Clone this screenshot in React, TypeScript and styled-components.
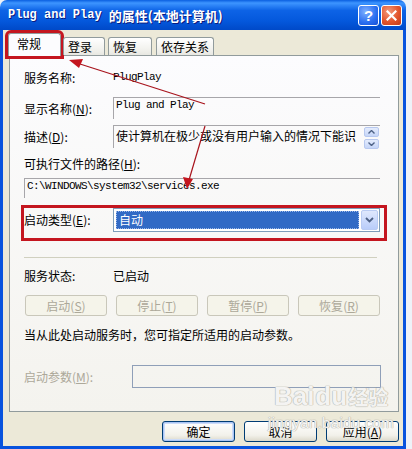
import React from 'react';
import styled, { createGlobalStyle, css } from 'styled-components';

const GlobalStyle = createGlobalStyle`
    html, body {
        margin: 0;
        padding: 0;
        background: #eef2f8;
    }
    body {
        width: 412px;
        height: 449px;
        overflow: hidden;
        font-family: "Noto Sans CJK SC", "Liberation Sans", sans-serif;
        font-size: 12px;
        color: #000;
    }
`;

const MONO = `"Liberation Mono", "Noto Sans CJK SC", monospace`;
const XP_BLUE = '#0853de';

const Window = styled.div`
    position: relative;
    width: 406px;
    height: 449px;
    display: flex;
    flex-direction: column;
`;

const TitleBar = styled.div`
    height: 30px;
    flex: none;
    display: flex;
    align-items: center;
    justify-content: space-between;
    padding: 0 4px 0 8px;
    border-radius: 7px 7px 0 0;
    background: linear-gradient(to bottom, #0a5fe0 0%, #3d95ff 10%, #0d63e6 35%, #0458dc 70%, #0049c8 100%);
`;

const Title = styled.div`
    color: #fff;
    font-weight: bold;
    text-shadow: 1px 1px 0 #0a1c80;
    display: flex;
    align-items: center;
    white-space: pre;
`;

const TitleLatin = styled.span`
    font-family: ${MONO};
    font-size: 12px;
`;

const TitleCjk = styled.span`
    font-size: 13px;
`;

const CaptionButtons = styled.div`
    display: flex;
    gap: 2px;
`;

const CaptionButton = styled.div<{ $close?: boolean }>`
    width: 19px;
    height: 19px;
    border: 1px solid #fff;
    border-radius: 3px;
    display: flex;
    align-items: center;
    justify-content: center;
    color: #fff;
    font-family: "Liberation Sans", sans-serif;
    font-weight: bold;
    font-size: 15px;
    background: ${(p) =>
        p.$close
            ? 'radial-gradient(circle at 35% 30%, #f39a7c 0%, #e2552c 55%, #c0391b 100%)'
            : 'radial-gradient(circle at 35% 30%, #7fb0ff 0%, #2a6ef0 60%, #1550d6 100%)'};
`;

const Body = styled.div`
    flex: 1;
    display: flex;
    flex-direction: column;
    background: #ece9d8;
    border: 3px solid ${XP_BLUE};
    border-top: none;
    padding: 3px 4px 4px 6px;
`;

const TabStrip = styled.div`
    height: 22px;
    display: flex;
    align-items: flex-end;
    position: relative;
    z-index: 1;
`;

const Tab = styled.div<{ $active?: boolean; $width: number; $gap: number }>`
    width: ${(p) => p.$width}px;
    margin-right: ${(p) => p.$gap}px;
    height: 18px;
    box-sizing: border-box;
    border: 1px solid #919b9c;
    border-bottom: none;
    border-radius: 3px 3px 0 0;
    background: linear-gradient(to bottom, #ffffff 0%, #f3f3ef 60%, #e8e8e2 100%);
    padding-left: 4px;
    line-height: 17px;
    font-size: 12px;
    ${(p) =>
        p.$active &&
        css`
            height: 23px;
            margin-left: -1px;
            margin-bottom: -1px;
            background: #fcfcfe;
            padding-left: 8px;
            line-height: 20px;
            outline: 3px solid #c4161f;
        `}
`;

const Panel = styled.div`
    height: 357px;
    box-sizing: border-box;
    border: 1px solid #919b9c;
    background: linear-gradient(to bottom, #fcfcfe 0%, #f4f3ee 100%);
    padding: 0 18px 0 14px;
    display: flex;
    flex-direction: column;
`;

const Row = styled.div<{ $top: number; $height: number }>`
    margin-top: ${(p) => p.$top}px;
    height: ${(p) => p.$height}px;
    display: flex;
    align-items: center;
    flex: none;
`;

const Label = styled.div<{ $disabled?: boolean; $width?: number }>`
    width: ${(p) => (p.$width ? `${p.$width}px` : 'auto')};
    flex: none;
    white-space: nowrap;
    color: ${(p) => (p.$disabled ? '#aca899' : '#000')};
    u {
        text-decoration: underline;
    }
`;

const MonoText = styled.span`
    font-family: ${MONO};
    font-size: 11px;
    letter-spacing: -0.6px;
    white-space: pre;
`;

const ReadOnlyField = styled.div<{ $height: number }>`
    flex: 1;
    height: ${(p) => p.$height}px;
    box-sizing: border-box;
    border-top: 1px solid #a7a6aa;
    border-left: 1px solid #a7a6aa;
    padding: 1px 0 0 2px;
    display: flex;
    align-items: flex-start;
    justify-content: space-between;
`;

const ScrollButtons = styled.div`
    display: flex;
    flex-direction: column;
    gap: 2px;
    margin-right: 1px;
`;

const SpinButton = styled.div`
    width: 15px;
    height: 10px;
    box-sizing: border-box;
    border: 1px solid #b7c8ef;
    border-radius: 2px;
    background: linear-gradient(to bottom, #e4ecfd, #c5d5f8);
    display: flex;
    align-items: center;
    justify-content: center;
`;

const StartupRow = styled(Row)`
    outline: 3px solid #c4161f;
    margin-left: 0;
    margin-right: -4px;
    padding-right: 4px;
    padding-bottom: 3px;
    align-items: flex-start;
`;

const StartupLabel = styled(Label)`
    line-height: 24px;
`;

const Combo = styled.div`
    flex: 1;
    height: 24px;
    box-sizing: border-box;
    border: 1px solid #7f9db9;
    background: #fff;
    display: flex;
    align-items: center;
    padding: 1px;
    gap: 2px;
`;

const ComboValue = styled.div`
    flex: 1;
    height: 18px;
    margin-left: 1px;
    box-sizing: border-box;
    background: #316ac5;
    border: 1px dotted #9cb8e8;
    color: #fff;
    line-height: 16px;
    padding-left: 2px;
`;

const ComboButton = styled.div`
    width: 17px;
    height: 20px;
    box-sizing: border-box;
    border: 1px solid #b9cbf3;
    border-radius: 2px;
    background: linear-gradient(to bottom, #dfe8fd, #b9cdfa);
    display: flex;
    align-items: center;
    justify-content: center;
`;

const Separator = styled.div`
    margin-top: 19px;
    margin-right: 3px;
    height: 1px;
    flex: none;
    background: #d0d0bf;
`;

const ButtonGrid = styled.div`
    margin-top: 12px;
    height: 21px;
    display: grid;
    grid-template-columns: repeat(4, 1fr);
    column-gap: 9px;
    padding: 0 0 0 1px;
    flex: none;
`;

const DisabledButton = styled.div`
    box-sizing: border-box;
    border: 1px solid #c9c7ba;
    border-radius: 3px;
    background: #f5f4ea;
    color: #aca899;
    display: flex;
    align-items: center;
    justify-content: center;
`;

const ParamField = styled.div`
    flex: 1;
    height: 23px;
    box-sizing: border-box;
    border: 1px solid #8f9fb8;
    margin-right: -1px;
`;

const Footer = styled.div`
    margin-top: 9px;
    display: flex;
    justify-content: flex-end;
    gap: 9px;
`;

const DialogButton = styled.div<{ $default?: boolean }>`
    width: 73px;
    height: 21px;
    box-sizing: border-box;
    border: 1px solid #003c74;
    border-radius: 3px;
    background: linear-gradient(to bottom, #ffffff 0%, #f2f1ea 70%, #dcd9cb 100%);
    display: flex;
    align-items: center;
    justify-content: center;
    ${(p) =>
        p.$default &&
        css`
            box-shadow: inset 0 0 0 1px #a9c4f4, inset 0 0 0 2px #cddcf8;
        `}
`;

const Annotations = styled.svg`
    position: absolute;
    left: 0;
    top: 0;
    pointer-events: none;
`;

const Watermark = styled.div`
    position: absolute;
    left: 268px;
    top: 382px;
    display: flex;
    flex-direction: column;
    align-items: center;
    pointer-events: none;
    color: rgba(255, 255, 255, 0.85);
    text-shadow: 0 0 1px #b9b7ad, 0 0 1px #b9b7ad, 0 0 1px #b9b7ad;
`;

const WatermarkLogo = styled.div`
    display: flex;
    align-items: flex-end;
    font-family: "Liberation Sans", sans-serif;
    font-weight: bold;
    font-size: 26px;
    line-height: 28px;
    gap: 1px;
`;

const WatermarkCjk = styled.span`
    font-family: "Noto Sans CJK SC", sans-serif;
    font-size: 20px;
    line-height: 27px;
    font-weight: bold;
`;

const WatermarkUrl = styled.div`
    margin-top: 4px;
    font-family: "Liberation Sans", sans-serif;
    font-size: 15px;
    letter-spacing: 0.3px;
`;

const Up = () => (
    <svg width="7" height="4" viewBox="0 0 7 4">
        <path d="M0.5 3.5 L3.5 0.5 L6.5 3.5" fill="none" stroke="#4d6185" strokeWidth="1.4" />
    </svg>
);

const Down = () => (
    <svg width="7" height="4" viewBox="0 0 7 4">
        <path d="M0.5 0.5 L3.5 3.5 L6.5 0.5" fill="none" stroke="#4d6185" strokeWidth="1.4" />
    </svg>
);

const ActionButtons = [
    { text: '启动', key: 'S' },
    { text: '停止', key: 'T' },
    { text: '暂停', key: 'P' },
    { text: '恢复', key: 'R' },
];

const Tabs = [
    { text: '常规', width: 53, gap: 2, active: true },
    { text: '登录', width: 42, gap: 3 },
    { text: '恢复', width: 44, gap: 4 },
    { text: '依存关系', width: 58, gap: 0 },
];

export default function App() {
    return (
        <Window>
            <GlobalStyle />
            <TitleBar>
                <Title>
                    <TitleLatin>Plug and Play </TitleLatin>
                    <TitleCjk>的属性(本地计算机)</TitleCjk>
                </Title>
                <CaptionButtons>
                    <CaptionButton>?</CaptionButton>
                    <CaptionButton $close>
                        <svg width="11" height="11" viewBox="0 0 11 11">
                            <path d="M1.5 1.5 L9.5 9.5 M9.5 1.5 L1.5 9.5" stroke="#fff" strokeWidth="2.2" strokeLinecap="square" />
                        </svg>
                    </CaptionButton>
                </CaptionButtons>
            </TitleBar>
            <Body>
                <TabStrip>
                    {Tabs.map((t) => (
                        <Tab key={t.text} $active={t.active} $width={t.width} $gap={t.gap}>
                            {t.text}
                        </Tab>
                    ))}
                </TabStrip>
                <Panel>
                    <Row $top={12} $height={18}>
                        <Label $width={89}>服务名称:</Label>
                        <MonoText>PlugPlay</MonoText>
                    </Row>
                    <Row $top={11} $height={22}>
                        <Label $width={89}>
                            显示名称(<u>N</u>):
                        </Label>
                        <ReadOnlyField $height={22}>
                            <MonoText>Plug and Play</MonoText>
                        </ReadOnlyField>
                    </Row>
                    <Row $top={6} $height={23}>
                        <Label $width={89}>
                            描述(<u>D</u>):
                        </Label>
                        <ReadOnlyField $height={23}>
                            <span>使计算机在极少或没有用户输入的情况下能识</span>
                            <ScrollButtons>
                                <SpinButton>
                                    <Up />
                                </SpinButton>
                                <SpinButton>
                                    <Down />
                                </SpinButton>
                            </ScrollButtons>
                        </ReadOnlyField>
                    </Row>
                    <Row $top={8} $height={14}>
                        <Label>
                            可执行文件的路径(<u>H</u>):
                        </Label>
                    </Row>
                    <Row $top={8} $height={20}>
                        <ReadOnlyField $height={20}>
                            <MonoText>C:\WINDOWS\system32\services.exe</MonoText>
                        </ReadOnlyField>
                    </Row>
                    <StartupRow $top={10} $height={27}>
                        <StartupLabel $width={89}>
                            启动类型(<u>E</u>):
                        </StartupLabel>
                        <Combo>
                            <ComboValue>自动</ComboValue>
                            <ComboButton>
                                <svg width="9" height="6" viewBox="0 0 9 6">
                                    <path d="M1 1 L4.5 4.5 L8 1" fill="none" stroke="#4d6185" strokeWidth="1.8" />
                                </svg>
                            </ComboButton>
                        </Combo>
                    </StartupRow>
                    <Separator />
                    <Row $top={9} $height={16}>
                        <Label $width={89}>服务状态:</Label>
                        <span>已启动</span>
                    </Row>
                    <ButtonGrid>
                        {ActionButtons.map((b) => (
                            <DisabledButton key={b.key}>
                                {b.text}(<u>{b.key}</u>)
                            </DisabledButton>
                        ))}
                    </ButtonGrid>
                    <Row $top={11} $height={14}>
                        <Label>当从此处启动服务时，您可指定所适用的启动参数。</Label>
                    </Row>
                    <Row $top={24} $height={23}>
                        <Label $disabled $width={108}>
                            启动参数(<u>M</u>):
                        </Label>
                        <ParamField />
                    </Row>
                </Panel>
                <Footer>
                    <DialogButton $default>确定</DialogButton>
                    <DialogButton>取消</DialogButton>
                    <DialogButton>
                        应用(<u>A</u>)
                    </DialogButton>
                </Footer>
            </Body>
            <Watermark>
                <WatermarkLogo>
                    <span>Bai</span>
                    <span>du</span>
                    <WatermarkCjk>经验</WatermarkCjk>
                </WatermarkLogo>
                <WatermarkUrl>jingyan.baidu.com</WatermarkUrl>
            </Watermark>
            <Annotations width="412" height="449" viewBox="0 0 412 449">
                <line x1="205" y1="104" x2="80" y2="64" stroke="#a8141d" strokeWidth="1.2" />
                <polygon points="69,60 83,59 79,68" fill="#c4161f" />
                <line x1="205" y1="126" x2="189" y2="180" stroke="#a8141d" strokeWidth="1.2" />
                <polygon points="187,189 183,177 193,179" fill="#c4161f" />
            </Annotations>
        </Window>
    );
}
